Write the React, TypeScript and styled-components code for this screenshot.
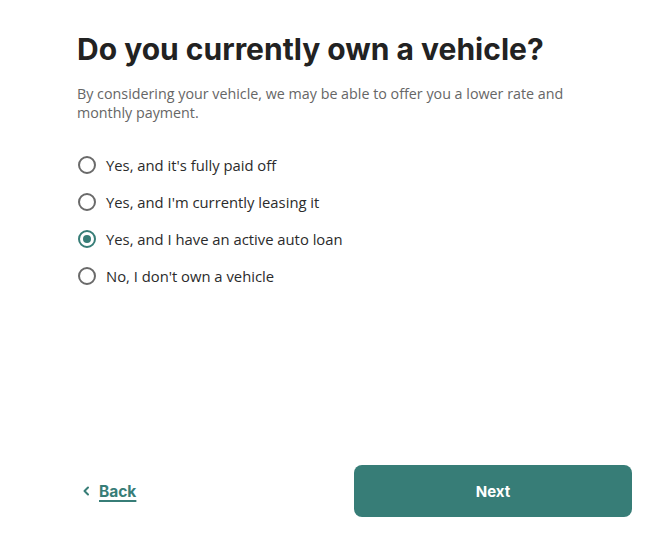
import React, { useState } from "react";
import styled, { createGlobalStyle } from "styled-components";

const Global = createGlobalStyle`
  html, body { margin: 0; padding: 0; background: #fff; }
  body { font-family: "Open Sans", "Liberation Sans", sans-serif; }
  * { box-sizing: border-box; }
`;

const TEAL = "#377d77";

const Page = styled.div`
  min-height: 100vh;
  display: flex;
  flex-direction: column;
  padding: 29px 38px 33px 77px;
`;

const Title = styled.h1`
  margin: 0;
  font-family: Inter, "Liberation Sans", sans-serif;
  font-weight: 700;
  font-size: 30px;
  line-height: 40px;
  color: #222;
  letter-spacing: 0;
`;

const Lead = styled.p`
  margin: 15px 0 0;
  font-size: 14.3px;
  line-height: 19px;
  color: #666;
  max-width: 520px;
`;

const Options = styled.div`
  margin-top: 32px;
  display: flex;
  flex-direction: column;
  gap: 15px;
`;

const Option = styled.label`
  display: flex;
  align-items: center;
  gap: 10px;
  height: 22px;
  font-size: 14.8px;
  color: #2b2b2b;
  cursor: pointer;
`;

const Dot = styled.span<{ $on: boolean }>`
  width: 18px;
  height: 18px;
  border-radius: 50%;
  border: 2px solid ${(p) => (p.$on ? TEAL : "#6a6a6a")};
  display: flex;
  align-items: center;
  justify-content: center;
  flex-shrink: 0;
  margin-left: 1px;
  &::after {
    content: "";
    width: 8px;
    height: 8px;
    border-radius: 50%;
    background: ${(p) => (p.$on ? TEAL : "transparent")};
  }
`;

const Footer = styled.div`
  margin-top: auto;
  display: flex;
  align-items: center;
  justify-content: space-between;
`;

const Back = styled.a`
  display: flex;
  align-items: center;
  gap: 9px;
  margin-left: 5px;
  font-family: Inter, "Liberation Sans", sans-serif;
  font-weight: 700;
  font-size: 15.5px;
  color: ${TEAL};
  cursor: pointer;
  span {
    text-decoration: underline;
    text-underline-offset: 3px;
    text-decoration-thickness: 2px;
  }
`;

const NextButton = styled.button`
  width: 278px;
  height: 52px;
  border: none;
  border-radius: 8px;
  background: ${TEAL};
  color: #fff;
  font-family: Inter, "Liberation Sans", sans-serif;
  font-weight: 700;
  font-size: 15px;
  cursor: pointer;
`;

const choices = [
  "Yes, and it's fully paid off",
  "Yes, and I'm currently leasing it",
  "Yes, and I have an active auto loan",
  "No, I don't own a vehicle",
];

export default function App() {
  const [sel, setSel] = useState(2);
  return (
    <>
      <Global />
      <Page>
        <Title>Do you currently own a vehicle?</Title>
        <Lead>
          By considering your vehicle, we may be able to offer you a lower rate and monthly payment.
        </Lead>
        <Options>
          {choices.map((c, i) => (
            <Option key={c} onClick={() => setSel(i)}>
              <Dot $on={sel === i} />
              {c}
            </Option>
          ))}
        </Options>
        <Footer>
          <Back>
            <svg width="8" height="10" viewBox="0 0 8 10" fill="none">
              <path d="M6 1.5 2.5 5 6 8.5" stroke={TEAL} strokeWidth="2" strokeLinecap="round" strokeLinejoin="round" />
            </svg>
            <span>Back</span>
          </Back>
          <NextButton>Next</NextButton>
        </Footer>
      </Page>
    </>
  );
}
